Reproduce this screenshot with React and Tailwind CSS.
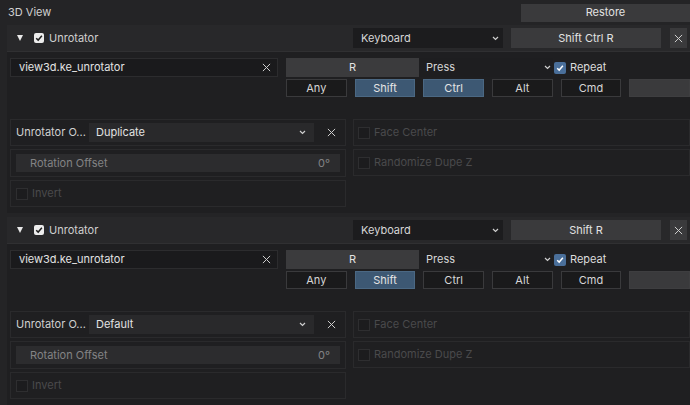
import React from 'react';

const Chevron = () => (
  <svg width="7" height="5" viewBox="0 0 7 5" className="shrink-0">
    <path d="M1 1 L3.5 3.5 L6 1" fill="none" stroke="#cfcfcf" strokeWidth="1.2" />
  </svg>
);

const Cross = ({ size = 9, color = '#cfcfcf' }) => (
  <svg width={size} height={size} viewBox="0 0 10 10" className="shrink-0">
    <path d="M1 1 L9 9 M9 1 L1 9" stroke={color} strokeWidth="1.1" />
  </svg>
);

const Check = ({ color }) => (
  <svg width="8" height="8" viewBox="0 0 10 10">
    <path d="M1.5 5.2 L4 7.6 L8.6 2.2" fill="none" stroke={color} strokeWidth="1.8" />
  </svg>
);

const ModKey = ({ label, active }) => (
  <div
    className={
      active
        ? 'h-[18px] flex items-center justify-center bg-[#3d5873] border border-[#4b6883] text-[#e4e4e4]'
        : 'h-[18px] flex items-center justify-center bg-[#1a1a1b] border border-[#3a3a3c] text-[#d6d6d6]'
    }
  >
    {label}
  </div>
);

const Panel = ({ shortcut, ctrl, mode }) => (
  <div className="ml-[7px] bg-[#1f1f21]">
    {/* header */}
    <div className="h-[27px] bg-[#28282a] border-b border-[#303032] flex items-center">
      <div className="w-[346px] flex items-center">
        <span className="ml-[10px] w-0 h-0 border-l-[3px] border-r-[3px] border-t-[6px] border-l-transparent border-r-transparent border-t-[#e8e8e8]" />
        <span className="ml-[11px] w-[10px] h-[10px] rounded-[2px] bg-[#ececec] flex items-center justify-center">
          <Check color="#1e1e1e" />
        </span>
        <span className="ml-[5px] text-[#cfcfcf]">Unrotator</span>
      </div>
      <div className="w-[150px] h-[20px] bg-[#1c1c1e] flex items-center justify-between pl-[8px] pr-[4px]">
        <span>Keyboard</span>
        <Chevron />
      </div>
      <div className="ml-[8px] w-[150px] h-[20px] bg-[#3a3a3c] flex items-center justify-center text-[#e2e2e2]">
        {shortcut}
      </div>
      <div className="ml-[9px] w-[17px] h-[20px] bg-[#3a3a3c] flex items-center justify-center">
        <Cross />
      </div>
    </div>

    {/* body */}
    <div className="pt-[6px] pb-[6px]">
      <div className="flex">
        <div className="ml-[3px] w-[268px] h-[19px] bg-[#1a1a1c] border border-[#2c2c2e] flex items-center justify-between pl-[8px] pr-[6px] text-[#e2e2e2]">
          <span>view3d.ke_unrotator</span>
          <Cross />
        </div>
        <div className="ml-[8px] w-[404px]">
          <div className="flex items-center h-[19px]">
            <div className="w-[133px] h-[19px] bg-[#3b3b3d] flex items-center justify-center text-[#e2e2e2]">R</div>
            <div className="w-[134px] h-[19px] bg-[#1e1e20] flex items-center justify-between pl-[7px] pr-[2px]">
              <span>Press</span>
              <Chevron />
            </div>
            <span className="ml-[1px] w-[12px] h-[12px] rounded-[2px] bg-[#4a6f9a] flex items-center justify-center">
              <Check color="#ffffff" />
            </span>
            <span className="ml-[4px] text-[#dcdcdc]">Repeat</span>
          </div>
          <div className="mt-[2px] grid grid-cols-6 gap-[8px]">
            <ModKey label="Any" />
            <ModKey label="Shift" active />
            <ModKey label="Ctrl" active={ctrl} />
            <ModKey label="Alt" />
            <ModKey label="Cmd" />
            <div className="h-[18px] bg-[#3a3a3c] border border-[#3e3e40]" />
          </div>
        </div>
      </div>

      <div className="mt-[22px] flex gap-[7px]">
        <div className="ml-[3px] w-[336px] flex flex-col gap-[3px]">
          <div className="h-[27px] border border-[#2a2a2c] flex items-center pl-[5px]">
            <span className="w-[73px] text-[#d0d0d0]">Unrotator O...</span>
            <div className="w-[225px] h-[19px] bg-[#29292b] flex items-center justify-between pl-[7px] pr-[8px] text-[#e2e2e2]">
              <span>{mode}</span>
              <Chevron />
            </div>
            <span className="ml-[13px]"><Cross /></span>
          </div>
          <div className="h-[28px] border border-[#2a2a2c] flex items-center pl-[5px]">
            <div className="w-[324px] h-[18px] bg-[#2c2c2e] flex items-center justify-between pl-[14px] pr-[10px] text-[#838385]">
              <span>Rotation Offset</span>
              <span>0°</span>
            </div>
          </div>
          <div className="h-[27px] border border-[#2a2a2c] flex items-center pl-[5px]">
            <span className="w-[12px] h-[12px] border border-[#2e2e30] bg-[#1c1c1e]" />
            <span className="ml-[4px] text-[#4a4a4c]">Invert</span>
          </div>
        </div>
        <div className="w-[337px] flex flex-col gap-[3px]">
          <div className="h-[27px] border border-[#2a2a2c] flex items-center pl-[4px]">
            <span className="w-[12px] h-[12px] border border-[#2e2e30] bg-[#1c1c1e]" />
            <span className="ml-[4px] text-[#4a4a4c]">Face Center</span>
          </div>
          <div className="h-[27px] border border-[#2a2a2c] flex items-center pl-[4px]">
            <span className="w-[12px] h-[12px] border border-[#2e2e30] bg-[#1c1c1e]" />
            <span className="ml-[4px] text-[#4a4a4c]">Randomize Dupe Z</span>
          </div>
        </div>
      </div>
    </div>
  </div>
);

export default function App() {
  return (
    <div className="w-[690px] h-[405px] overflow-hidden bg-[#242426] text-[11px] text-[#d6d6d6] font-['Inter','Liberation_Sans',sans-serif] leading-none">
      <div className="h-[25px] flex items-center">
        <span className="ml-[8px] text-[#d0d0d0]">3D View</span>
        <div className="ml-auto w-[169px] h-[18px] bg-[#3a3a3c] flex items-center justify-center text-[#e2e2e2]">
          Restore
        </div>
      </div>
      <div className="flex flex-col gap-[4px]">
        <Panel shortcut="Shift Ctrl R" ctrl mode="Duplicate" />
        <Panel shortcut="Shift R" mode="Default" />
      </div>
    </div>
  );
}
